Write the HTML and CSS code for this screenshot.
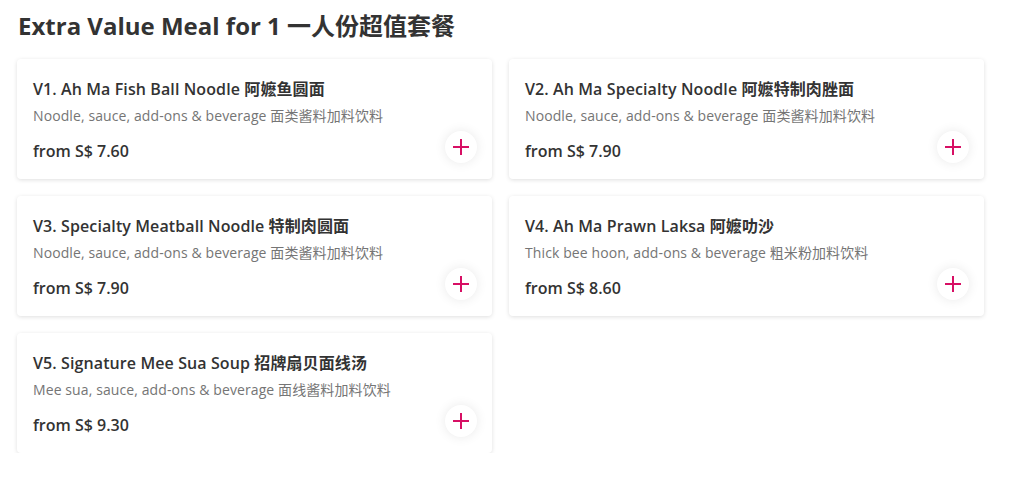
FILE: index.html
```html
<!DOCTYPE html>
<html lang="en">
<head>
<meta charset="utf-8">
<title>Extra Value Meal for 1</title>
<link rel="stylesheet" href="styles.css">
</head>
<body>
<section class="menu-section">
  <h1 class="section-title">Extra Value Meal for 1 一人份超值套餐</h1>
  <div class="grid">
    <div class="card">
      <div class="info">
        <div class="name">V1. Ah Ma Fish Ball Noodle 阿嬷鱼圆面</div>
        <div class="desc">Noodle, sauce, add-ons &amp; beverage 面类酱料加料饮料</div>
        <div class="price">from S$ 7.60</div>
      </div>
      <button class="add" aria-label="Add"><svg viewBox="0 0 16 16" width="16" height="16"><path d="M8 0v16M0 8h16" stroke="#d70f64" stroke-width="2"/></svg></button>
    </div>
    <div class="card">
      <div class="info">
        <div class="name">V2. Ah Ma Specialty Noodle 阿嬷特制肉脞面</div>
        <div class="desc">Noodle, sauce, add-ons &amp; beverage 面类酱料加料饮料</div>
        <div class="price">from S$ 7.90</div>
      </div>
      <button class="add" aria-label="Add"><svg viewBox="0 0 16 16" width="16" height="16"><path d="M8 0v16M0 8h16" stroke="#d70f64" stroke-width="2"/></svg></button>
    </div>
    <div class="card">
      <div class="info">
        <div class="name">V3. Specialty Meatball Noodle 特制肉圆面</div>
        <div class="desc">Noodle, sauce, add-ons &amp; beverage 面类酱料加料饮料</div>
        <div class="price">from S$ 7.90</div>
      </div>
      <button class="add" aria-label="Add"><svg viewBox="0 0 16 16" width="16" height="16"><path d="M8 0v16M0 8h16" stroke="#d70f64" stroke-width="2"/></svg></button>
    </div>
    <div class="card">
      <div class="info">
        <div class="name">V4. Ah Ma Prawn Laksa 阿嬷叻沙</div>
        <div class="desc">Thick bee hoon, add-ons &amp; beverage 粗米粉加料饮料</div>
        <div class="price">from S$ 8.60</div>
      </div>
      <button class="add" aria-label="Add"><svg viewBox="0 0 16 16" width="16" height="16"><path d="M8 0v16M0 8h16" stroke="#d70f64" stroke-width="2"/></svg></button>
    </div>
    <div class="card">
      <div class="info">
        <div class="name">V5. Signature Mee Sua Soup 招牌扇贝面线汤</div>
        <div class="desc">Mee sua, sauce, add-ons &amp; beverage 面线酱料加料饮料</div>
        <div class="price">from S$ 9.30</div>
      </div>
      <button class="add" aria-label="Add"><svg viewBox="0 0 16 16" width="16" height="16"><path d="M8 0v16M0 8h16" stroke="#d70f64" stroke-width="2"/></svg></button>
    </div>
  </div>
</section>
</body>
</html>
```
FILE: styles.css
```css
html, body {
  margin: 0;
  padding: 0;
  background: #fff;
}
body {
  font-family: "Open Sans", "Noto Sans CJK SC", sans-serif;
  color: #333;
}
.menu-section {
  padding: 10px 17px 0 17px;
}
.section-title {
  margin: 0 0 17px 1px;
  font-size: 24px;
  line-height: 32px;
  font-weight: 700;
  color: #333;
}
.grid {
  display: grid;
  grid-template-columns: 475px 475px;
  column-gap: 17px;
  row-gap: 17px;
}
.card {
  display: flex;
  justify-content: space-between;
  height: 120px;
  box-sizing: border-box;
  padding: 18px 15px 16px 16px;
  background: #fff;
  border-radius: 4px;
  box-shadow: 0 1px 4px rgba(0, 0, 0, 0.13);
}
.info {
  display: flex;
  flex-direction: column;
}
.name {
  font-size: 16px;
  line-height: 24px;
  font-weight: 600;
  letter-spacing: 0.1px;
  color: #333;
}
.desc {
  margin-top: 5px;
  font-size: 14px;
  line-height: 20px;
  letter-spacing: 0.1px;
  color: #757575;
}
.price {
  margin-top: 13px;
  font-size: 16px;
  line-height: 24px;
  font-weight: 600;
  color: #333;
}
.add {
  align-self: flex-end;
  display: flex;
  align-items: center;
  justify-content: center;
  width: 32px;
  height: 32px;
  padding: 0;
  border: none;
  border-radius: 50%;
  background: #fff;
  box-shadow: 0 0 12px rgba(0, 0, 0, 0.09);
  cursor: pointer;
}
```
